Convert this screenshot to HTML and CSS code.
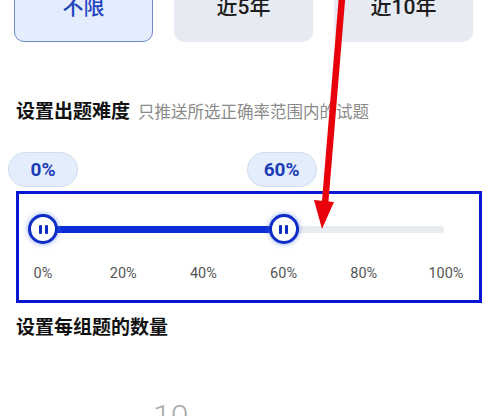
FILE: index.html
```html
<!DOCTYPE html>
<html lang="zh-CN">
<head>
<meta charset="utf-8">
<title>设置</title>
<link rel="stylesheet" href="styles.css">
</head>
<body>
<div class="page">
  <div class="options">
    <div class="opt opt-active">不限<span class="corner"></span></div>
    <div class="opt">近5年</div>
    <div class="opt">近10年</div>
  </div>

  <div class="heading">
    <span class="title">设置出题难度</span>
    <span class="sub">只推送所选正确率范围内的试题</span>
  </div>

  <div class="bubbles">
    <div class="bubble" style="left:0%">0%</div>
    <div class="bubble" style="left:60%">60%</div>
  </div>

  <div class="panel">
    <div class="slider">
      <div class="rail"></div>
      <div class="fill" style="width:60%"></div>
      <div class="thumb" style="left:0%"><i></i><i></i></div>
      <div class="thumb" style="left:60%"><i></i><i></i></div>
    </div>
    <div class="ticks">
      <span class="tick"><b>0%</b></span>
      <span class="tick"><b>20%</b></span>
      <span class="tick"><b>40%</b></span>
      <span class="tick"><b>60%</b></span>
      <span class="tick"><b>80%</b></span>
      <span class="tick"><b>100%</b></span>
    </div>
  </div>

  <div class="heading2">设置每组题的数量</div>

  <div class="picker">10</div>

  <svg class="arrow" width="499" height="416" viewBox="0 0 499 416">
    <line x1="342" y1="-2" x2="325" y2="204" stroke="#e8000b" stroke-width="6.5" stroke-linecap="butt"/>
    <polygon points="314,200 334,202 322,229" fill="#e8000b"/>
  </svg>
</div>
</body>
</html>
```

FILE: styles.css
```css
html, body {
  margin: 0;
  padding: 0;
  background: #ffffff;
  overflow: hidden;
}
body {
  font-family: "Roboto", "Noto Sans CJK SC", sans-serif;
  width: 499px;
  height: 416px;
}
.page {
  position: relative;
  width: 499px;
  height: 416px;
  overflow: hidden;
}
.options {
  display: flex;
  gap: 21px;
  padding-left: 14px;
  margin-top: -32px;
}
.opt {
  position: relative;
  box-sizing: border-box;
  width: 139px;
  height: 74px;
  border-radius: 10px;
  background: #e6eaf2;
  color: #1c1c1c;
  font-size: 21px;
  font-weight: 500;
  display: flex;
  align-items: center;
  justify-content: center;
  overflow: hidden;
}
.opt-active {
  background: #e3edfd;
  border: 1px solid #6f8acb;
  color: #1e43bd;
}
.corner {
  position: absolute;
  top: -1px;
  right: -1px;
  width: 30px;
  height: 30px;
  background: #1639c8;
  clip-path: polygon(0 0, 100% 0, 100% 100%);
}
.heading {
  margin-top: 57px;
  padding-left: 16px;
  height: 26px;
  line-height: 26px;
  display: flex;
  align-items: baseline;
}
.title {
  font-size: 19px;
  font-weight: 700;
  color: #111;
}
.sub {
  margin-left: 8px;
  font-size: 16.5px;
  color: #8a8a8a;
}
.bubbles {
  position: relative;
  margin-top: 27px;
  margin-left: 43px;
  width: 401px;
  height: 35px;
}
.bubble {
  position: absolute;
  top: 0;
  transform: translateX(-50%);
  box-sizing: border-box;
  width: 70px;
  height: 35px;
  border-radius: 18px;
  background: #e4edfb;
  border: 1px solid #d0dcf1;
  color: #1a3cb8;
  font-weight: 700;
  font-size: 19px;
  display: flex;
  align-items: center;
  justify-content: center;
}
.bubble + .bubble {
  margin-left: -2px;
}
.panel {
  box-sizing: border-box;
  margin-top: 4px;
  margin-left: 16px;
  width: 466px;
  height: 112px;
  border: 3px solid #0a17d2;
  padding: 19px 0 0 24px;
}
.slider {
  position: relative;
  width: 401px;
  height: 32px;
}
.rail {
  position: absolute;
  left: 0;
  right: 0;
  top: 13px;
  height: 7px;
  border-radius: 4px;
  background: #e8ebf0;
}
.fill {
  position: absolute;
  left: 0;
  top: 13px;
  height: 7px;
  background: #0b2ed6;
}
.thumb {
  position: absolute;
  top: 1px;
  transform: translateX(-50%);
  box-sizing: border-box;
  width: 30px;
  height: 30px;
  border-radius: 50%;
  background: #ffffff;
  border: 3px solid #0c2cc4;
  box-shadow: 0 0 4px 1px rgba(70, 110, 230, 0.45);
  display: flex;
  align-items: center;
  justify-content: center;
  gap: 3px;
}
.thumb i {
  display: block;
  width: 3px;
  height: 9px;
  border-radius: 1px;
  background: #0c2cc4;
}
.ticks {
  margin-top: 21px;
  width: 401px;
  display: flex;
  justify-content: space-between;
}
.tick {
  width: 0;
  display: flex;
  justify-content: center;
}
.tick b {
  font-weight: 400;
  font-size: 14.5px;
  line-height: 16px;
  color: #555;
  white-space: nowrap;
}
.tick:last-child b {
  margin-left: 4px;
}
.heading2 {
  margin-top: 12px;
  padding-left: 16px;
  height: 26px;
  line-height: 26px;
  font-size: 19px;
  font-weight: 600;
  color: #111;
}
.picker {
  margin-top: 55px;
  padding-left: 153px;
  font-size: 32px;
  line-height: 40px;
  font-weight: 300;
  color: #aaaaaa;
}
.arrow {
  position: absolute;
  left: 0;
  top: 0;
  pointer-events: none;
}
```
